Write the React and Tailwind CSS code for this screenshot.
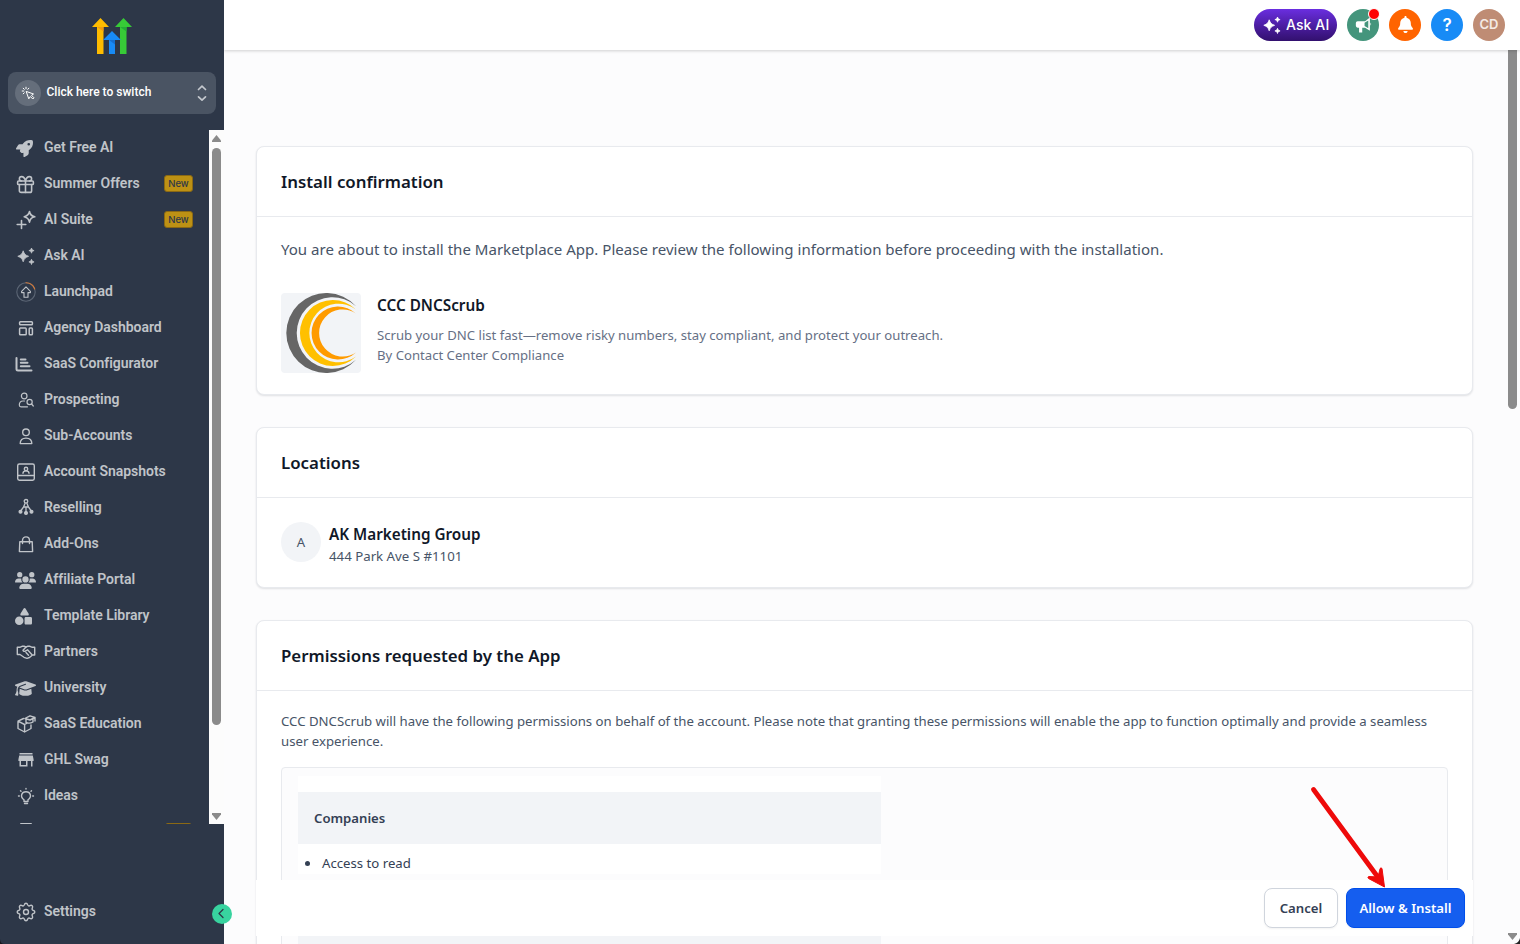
import { Gift } from "lucide-react";
import { FaRocket, FaUsers, FaShapes, FaGraduationCap, FaBell } from "react-icons/fa6";

const Svg = ({ size = 20, sw = 1.5, vb = 20, children, className }) => (
  <svg width={size} height={size} viewBox={`0 0 ${vb} ${vb}`} fill="none" stroke="currentColor" strokeWidth={sw} strokeLinecap="round" strokeLinejoin="round" className={className}>
    {children}
  </svg>
);

const Sparkles = ({ size = 20 }) => (
  <svg width={size} height={size} viewBox="0 0 20 20" fill="currentColor" stroke="currentColor" strokeWidth=".8" strokeLinejoin="round">
    <path d="M7.200 4.800C8.500 8.300 9.100 8.900 12.600 10.300C9.100 11.700 8.500 12.300 7.200 15.800C5.900 12.300 5.300 11.700 1.800 10.300C5.300 8.900 5.900 8.300 7.200 4.800Z" />
    <path d="M15.500 2C16 3.700 16.400 4.100 18.100 4.600C16.400 5.100 16 5.500 15.500 7.200C15 5.500 14.600 5.100 12.900 4.600C14.600 4.100 15 3.700 15.500 2Z" />
    <path d="M15.500 13.300C16 15 16.400 15.400 18.100 15.900C16.400 16.400 16 16.800 15.500 18.500C15 16.800 14.600 16.400 12.900 15.900C14.600 15.400 15 15 15.500 13.300Z" />
  </svg>
);

const icons = {
  rocket: <FaRocket size={17} />,
  gift: <Gift size={21} strokeWidth={1.8} className="-ml-px shrink-0" />,
  suite: (
    <Svg sw={1.6}>
      <path d="M13.500 1.500Q14.200 5.800 18.800 6.800Q14.200 7.800 13.500 12.100Q12.500 7.800 8.200 6.800Q12.500 5.800 13.500 1.500Z" />
      <path d="M5.500 10.500v8M1.200 14.500h8.600" />
    </Svg>
  ),
  ask: <Sparkles />,
  launch: (
    <Svg sw={1.1}>
      <circle cx="10" cy="10" r="9.200" stroke="#5b6574" />
      <path d="M10 .8A9.200 9.200 0 0 1 18.700 7" stroke="#d97a35" />
      <path d="M10 4.800L14.400 9.300V10.600H12V15.300H8V10.600H5.600V9.300Z" />
    </Svg>
  ),
  dash: (
    <Svg>
      <rect x="3.600" y="3.800" width="12.800" height="3" rx=".8" />
      <rect x="3.600" y="10.100" width="6.600" height="6.600" rx=".8" />
      <rect x="13.200" y="10.100" width="3.200" height="6.600" rx=".8" />
    </Svg>
  ),
  config: (
    <Svg className="-ml-[2px]" sw={2}>
      <path d="M2.500 4V15Q2.500 16.500 4 16.500H17.500M6.800 5.500H11.500M6.800 8.800H13.500M6.800 12.200H15.500" />
    </Svg>
  ),
  prospect: (
    <Svg sw={1.2}>
      <circle cx="8.200" cy="6" r="2.800" />
      <path d="M8.500 11H7C4.500 11 3.300 12.500 3.300 15Q3.300 16.800 5 16.800H11.500" />
      <circle cx="13.600" cy="12" r="2.600" />
      <path d="M15.600 14L17.300 16" />
    </Svg>
  ),
  user: (
    <Svg sw={1.4}>
      <circle cx="10" cy="6.300" r="3.300" />
      <path d="M4.200 17.600C4.200 13.800 6.200 12.100 10 12.100S15.800 13.800 15.800 17.600Z" />
    </Svg>
  ),
  snap: (
    <Svg sw={1.4}>
      <rect x="1.700" y="2" width="16.600" height="16.200" rx="1.700" />
      <path d="M1.700 13.500H18.300M7 11.200C7 9.800 8 8.900 10 8.900S13 9.800 13 11.200" />
      <circle cx="10" cy="7" r="1.700" />
    </Svg>
  ),
  resell: (
    <Svg sw={1.3}>
      <circle cx="10" cy="3.300" r="1.800" />
      <path d="M9 5.500L7.500 9H12.500L11 5.500M10 9V14M7.200 9.500L5 12.500M12.800 9.500L15 12.500" />
      <circle cx="4.500" cy="13.800" r="1.400" fill="currentColor" />
      <circle cx="10" cy="15" r="1.400" fill="currentColor" />
      <circle cx="15.500" cy="13.800" r="1.400" fill="currentColor" />
    </Svg>
  ),
  bag: (
    <Svg sw={1.4}>
      <path d="M3.800 7.800H16.200L16.600 17.600H3.400ZM6.500 9.500V6.500C6.500 1.600 13.500 1.600 13.500 6.500V9.500" />
    </Svg>
  ),
  users: <FaUsers size={21} className="-ml-px shrink-0" />,
  shapes: <FaShapes size={17} className="-ml-px" />,
  hand: (
    <Svg sw={1.4}>
      <path d="M1.300 5.300H3.700L6 4.300H8.500L10 5L11.500 4.300H14L16.300 5.300H18.700V13H16.500L13.500 15.500L11 16.300L8 15.300L4 12.500H1.300Z" />
      <path d="M10 5L7 8.200Q7.500 10 9.500 9L11.500 7.800L15.800 12.500M10 10.500L12.500 13.300" />
    </Svg>
  ),
  grad: <FaGraduationCap size={21} className="-ml-px shrink-0" />,
  edu: (
    <Svg sw={1.4}>
      <path d="M7.500 4.500L2 7.200V14.500L8.600 18L15 14.500V11M2 7.200L8.600 10.500V18M8.600 10.500L10.500 9.500" />
      <path d="M8.800 4.500L14 1.800L19 3.500L14 6ZM10 5.500V8.500Q13.500 10 17 8V5M19 3.500V7" />
    </Svg>
  ),
  shop: (
    <svg width="20" height="20" viewBox="0 0 20 20" fill="currentColor">
      <path d="M3.500 3H16.500V4.500H3.500ZM3.200 5.600H16.800L17.600 9.500V11H16.500V16.600H15V11H11.500V16.600H3.500V11H2.400V9.500ZM5 11V15H10V11Z" fillRule="evenodd" />
    </svg>
  ),
  idea: (
    <Svg sw={1.4}>
      <path d="M8 13.800C3.500 10.500 5.800 5.800 10 5.800S16.500 10.500 12 13.800V15.500H8ZM8.500 17.500H11.500M10 2.500V3M4.500 4.700L5 5.200M15.500 4.700L15 5.200M2.500 10H3.300M16.700 10H17.500" />
    </Svg>
  ),
};

const items = [
  ["rocket", "Get Free AI"],
  ["gift", "Summer Offers", true],
  ["suite", "AI Suite", true],
  ["ask", "Ask AI"],
  ["launch", "Launchpad"],
  ["dash", "Agency Dashboard"],
  ["config", "SaaS Configurator"],
  ["prospect", "Prospecting"],
  ["user", "Sub-Accounts"],
  ["snap", "Account Snapshots"],
  ["resell", "Reselling"],
  ["bag", "Add-Ons"],
  ["users", "Affiliate Portal"],
  ["shapes", "Template Library"],
  ["hand", "Partners"],
  ["grad", "University"],
  ["edu", "SaaS Education"],
  ["shop", "GHL Swag"],
  ["idea", "Ideas"],
];

function Sidebar() {
  return (
    <aside className="relative z-20 flex h-full w-56 shrink-0 flex-col bg-[#2d3748] font-['Roboto',sans-serif]">
      <div className="flex h-[72px] shrink-0 justify-center pt-[18px]">
        <svg width="40" height="36" viewBox="0 0 40 36">
          <path d="M0 9L8.500 0L17 9H11.500V36H5V9Z" fill="#ffbc00" />
          <path d="M23 9L31.500 0L40 9H34.500V36H28V9Z" fill="#37ca37" />
          <path d="M11 22L20 13L29 22H23V36H17V22Z" fill="#188bf6" />
          <path d="M5 9H11.500V13.500Z" fill="#f29a12" />
          <path d="M28 9H34.500V13.500Z" fill="#23ad35" />
          <path d="M17 22H23V26.500Z" fill="#146fd0" />
        </svg>
      </div>
      <div className="mx-2 flex h-[42px] shrink-0 items-center rounded-lg bg-[#4a5463] pl-[7px] pr-2">
        <span className="flex size-[26px] items-center justify-center rounded-full bg-[#656e7b] text-white">
          <Svg size={14} vb={14} sw={1}>
            <path d="M5.500 5.500L12.500 8L10.500 9.300L13 11.800L11.800 13L9.300 10.500L8 12.500ZM5 1.200V2.800M1.200 5H2.800M2.200 2.200L3.300 3.300M7.800 2.200L6.800 3.300M2.200 7.800L3.300 6.800" />
          </Svg>
        </span>
        <span className="-mt-[2px] ml-[5.500px] flex-1 text-[12px] font-medium text-white">Click here to switch</span>
        <Svg size={12} vb={12} sw={1.700} className="h-[16px] overflow-visible text-[#c4c8ce]">
          <path d="M2.500 2.500L6 -.8L9.500 2.500M2.500 9.800L6 13.100L9.500 9.800" />
        </Svg>
      </div>
      <div className="mt-4 flex h-[694px] shrink-0">
        <nav className="flex-1 overflow-hidden text-[#c0c4c9]">
          {items.map(([icon, label, isNew]) => (
            <div key={label} className="flex h-9 items-center px-4">
              <span className="flex size-5 shrink-0 items-center">{icons[icon]}</span>
              <span className="-mt-px ml-2 flex-1 whitespace-nowrap text-[14px] font-semibold tracking-[-0.030px]">{label}</span>
              {isNew && <span className="-mt-px flex h-[17px] w-[29px] items-center justify-center rounded-[3px] border border-[#8b6914] bg-[#bd9114] pt-px font-['Inter',sans-serif] text-[9.500px] font-medium text-[#2d3748]">New</span>}
            </div>
          ))}
          <div className="flex items-start justify-between pl-5 pr-[17px] pt-[9px]">
            <span className="h-4 w-3 rounded-[1px] border-t-[1.500px] border-[#c0c4c9]" />
            <span className="h-4 w-[27px] rounded-[3px] border border-[#8b6914] bg-[#bd9114]" />
          </div>
        </nav>
        <div className="flex w-[15px] flex-col items-center bg-[#fcfcfc]">
          <svg width="9" height="7" viewBox="0 0 9 7" className="mt-[5px]"><path d="M4.500 0L9 5.500V7H0V5.500Z" fill="#8b8b8b" /></svg>
          <div className="mt-[6px] h-[577px] w-[9px] rounded-full bg-[#8b8b8b]" />
          <svg width="9" height="7" viewBox="0 0 9 7" className="mb-1 mt-auto"><path d="M0 0H9V1.500L4.500 7L0 1.500Z" fill="#8b8b8b" /></svg>
        </div>
      </div>
      <div className="mt-[69px] flex h-9 items-center pl-4 text-[#c0c4c9]">
        <Svg sw={1.400} className="mt-[2px]">
          <path d="M10 1.200C11.300 1.200 11.400 1.900 11.700 2.900C12 3.800 13 4.200 13.900 3.700C14.800 3.200 15.400 3 16.200 3.800S16.800 5.200 16.300 6.100C15.800 7 16.200 8 17.100 8.300C18.100 8.600 18.800 8.700 18.800 10S18.100 11.400 17.100 11.700C16.200 12 15.800 13 16.300 13.900C16.800 14.800 17 15.400 16.200 16.200S14.800 16.800 13.900 16.300C13 15.800 12 16.200 11.700 17.100C11.400 18.100 11.300 18.800 10 18.800S8.600 18.100 8.300 17.100C8 16.200 7 15.800 6.100 16.300C5.200 16.800 4.600 17 3.800 16.200S3.200 14.800 3.700 13.900C4.200 13 3.800 12 2.900 11.700C1.900 11.400 1.200 11.300 1.200 10S1.900 8.600 2.900 8.300C3.800 8 4.200 7 3.700 6.100C3.200 5.200 3 4.600 3.800 3.800S5.200 3.200 6.100 3.700C7 4.200 8 3.800 8.300 2.900C8.600 1.900 8.700 1.200 10 1.200Z" />
          <circle cx="10" cy="10" r="2.500" />
        </Svg>
        <span className="ml-2 text-[14px] font-semibold tracking-[-0.030px]">Settings</span>
      </div>
      <button className="absolute left-[211.500px] top-[903.500px] flex size-[20.500px] items-center justify-center rounded-full bg-[#38d39f] text-[#2d3748]">
        <Svg size={11} vb={11} sw={1.300}><path d="M7 1.500L3 5.500L7 9.500" /></Svg>
      </button>
      <svg width="5" height="5" viewBox="0 0 5 5" className="absolute bottom-0 left-0"><path d="M0 0Q0 5 5 5H0Z" fill="#17181f" /></svg>
    </aside>
  );
}

function Header() {
  return (
    <header className="relative z-10 flex h-[50px] shrink-0 items-center justify-end gap-2.5 bg-white pr-[15px] font-['Inter',sans-serif] text-white shadow-[0_1px_3px_rgba(0,0,0,0.18)]">
      <div className="flex h-8 w-[83px] items-center rounded-full bg-linear-to-b from-[#6a2ee0] to-[#32106e] pl-2">
        <Sparkles size={20} />
        <span className="-mt-px ml-1 whitespace-nowrap text-[14px] font-[450] tracking-[0.1px]">Ask AI</span>
      </div>
      <div className="relative flex size-8 items-center justify-center rounded-full bg-[#44957c]">
        <svg width="17" height="17" viewBox="0 0 16 16" fill="#fff">
          <path d="M14 .5V13L9.500 10H6.800V14.500H3.800V10H2.500Q.8 10 .8 8.300V5.600Q.8 4 2.500 4H9.500ZM9 5.500V8.500L12.500 10.500V3.300Z" fillRule="evenodd" />
          <path d="M14.500 5.200Q16 6.700 14.500 8.300Z" />
        </svg>
        <span className="absolute -top-px left-[21px] size-[12px] rounded-full border border-white bg-[#f00]" />
      </div>
      <div className="flex size-8 items-center justify-center rounded-full bg-[#ff6400]"><FaBell size={17} className="-mt-0.5" /></div>
      <div className="flex size-8 items-center justify-center rounded-full bg-[#188bf6] pt-px text-[17px] font-semibold">?</div>
      <div className="flex size-8 items-center justify-center rounded-full bg-[#bf8c74] text-[13px] font-semibold text-[#f5ebe6]">CD</div>
    </header>
  );
}

const Card = ({ title, className, children }) => (
  <section className={`shrink-0 rounded-lg border border-[#e8eaee] bg-white shadow-[0_1px_2px_rgba(16,24,40,0.12)] ${className}`}>
    <h2 className="flex h-[70px] items-center border-b border-[#e8eaee] px-6 text-[16.850px] font-[580] text-[#101828]">{title}</h2>
    {children}
  </section>
);

export default function App() {
  return (
    <div className="flex h-[944px] w-[1520px] overflow-hidden bg-[#fcfcfd]">
      <Sidebar />
      <div className="relative flex min-w-0 flex-1 flex-col font-['Noto_Sans','Open_Sans',sans-serif]">
        <Header />
        <div className="flex min-h-0 flex-1">
          <main className="flex min-w-0 flex-1 flex-col gap-8 overflow-hidden px-8 pt-24">
            <Card title="Install confirmation" className="h-[249px]">
              <div className="px-6 pt-5">
                <p className="h-[56px] whitespace-nowrap text-[15.050px] leading-6 text-[#475467]">
                  You are about to install the Marketplace App. Please review the following information before proceeding with the installation.
                </p>
                <div className="flex gap-4">
                  <svg width="80" height="80" viewBox="0 0 80 80" className="rounded-sm bg-[#f2f4f7]">
                    <path d="M75 13.200A40 40 0 1 0 75 66.800A35.700 35.700 0 1 1 75 13.200Z" fill="#666" />
                    <path d="M75 16.400A33 33 0 1 0 75 63.600A29.300 29.300 0 1 1 75 16.400Z" fill="#ffc000" />
                    <path d="M75 20.500A26.500 26.500 0 1 0 75 59.500A23.600 23.600 0 1 1 75 20.500Z" fill="#ff9b00" />
                  </svg>
                  <div className="whitespace-nowrap">
                    <h3 className="text-[15.300px] font-[580] leading-6 text-[#101828]">CCC DNCScrub</h3>
                    <p className="mt-2 text-[13.150px] leading-5 text-[#667085]">Scrub your DNC list fast—remove risky numbers, stay compliant, and protect your outreach.</p>
                    <p className="text-[13.150px] leading-5 text-[#667085]">By Contact Center Compliance</p>
                  </div>
                </div>
              </div>
            </Card>
            <Card title="Locations" className="h-[161px]">
              <div className="flex items-start gap-2 px-6 pt-6">
                <span className="flex size-10 items-center justify-center rounded-full bg-[#f2f4f7] pt-px text-[13.150px] text-[#475467]">A</span>
                <div className="whitespace-nowrap">
                  <h3 className="text-[15.250px] font-[580] leading-6 text-[#101828]">AK Marketing Group</h3>
                  <p className="text-[13.250px] leading-5 text-[#475467]">444 Park Ave S #1101</p>
                </div>
              </div>
            </Card>
            <Card title="Permissions requested by the App" className="h-[800px]">
              <div className="px-6 pt-5">
                <p className="whitespace-nowrap text-[13.190px] leading-5 text-[#475467]">
                  CCC DNCScrub will have the following permissions on behalf of the account. Please note that granting these permissions will enable the app to function optimally and provide a seamless<br />user experience.
                </p>
                <div className="mt-4 h-[500px] rounded-sm border border-[#e8eaee] bg-[#fcfcfd] pl-4 pt-2">
                  <div className="h-[98px] w-[583px] bg-white pt-4">
                    <div className="flex h-[52px] items-center bg-[#f2f4f7] pl-4 pt-px text-[13.150px] font-[580] text-[#344054]">Companies</div>
                    <div className="flex h-[38px] items-center pl-[7px] text-[13.200px] text-[#344054]">
                      <span className="mr-3 size-[5px] rounded-full bg-[#344054]" />
                      <span className="pt-px">Access to read</span>
                    </div>
                  </div>
                  <div className="mt-8 h-[100px] w-[583px] bg-white pt-4">
                    <div className="h-[52px] bg-[#f2f4f7]" />
                  </div>
                </div>
              </div>
            </Card>
          </main>
          <div className="flex w-[15px] flex-col items-center">
            <div className="h-[359px] w-[9px] rounded-b-full bg-[#8b8b8b]" />
            <svg width="9" height="7" viewBox="0 0 9 7" className="mb-1 mt-auto"><path d="M0 0H9V1.500L4.500 7L0 1.500Z" fill="#8b8b8b" /></svg>
          </div>
        </div>
        <div className="absolute bottom-2 left-8 flex h-14 w-[1217px] items-center justify-end gap-2 bg-white pr-2 text-[13.200px] font-[580]">
          <button className="h-10 w-[74px] rounded-lg border border-[#d0d5dd] bg-white pt-px text-[#344054] shadow-xs">Cancel</button>
          <button className="h-10 w-[119px] whitespace-nowrap rounded-lg border border-[#004eeb] bg-[#155eef] pt-px text-white shadow-xs">Allow &amp; Install</button>
        </div>
        <svg width="80" height="105" viewBox="0 0 80 105" className="absolute left-[1084px] top-[784px]">
          <path d="M5.500 5.500L72 96" stroke="#ee0a0a" strokeWidth="4.800" strokeLinecap="round" />
          <path d="M76.500 103L74 84.500Q72.500 83 72 85L70 93L61 92.500Q59 93 60.500 94.500Z" fill="#ee0a0a" stroke="#ee0a0a" strokeLinejoin="round" />
        </svg>
        <svg width="6" height="6" viewBox="0 0 6 6" className="absolute bottom-0 right-0"><path d="M6 0Q5 5 0 6H6Z" fill="#222" /></svg>
      </div>
    </div>
  );
}
